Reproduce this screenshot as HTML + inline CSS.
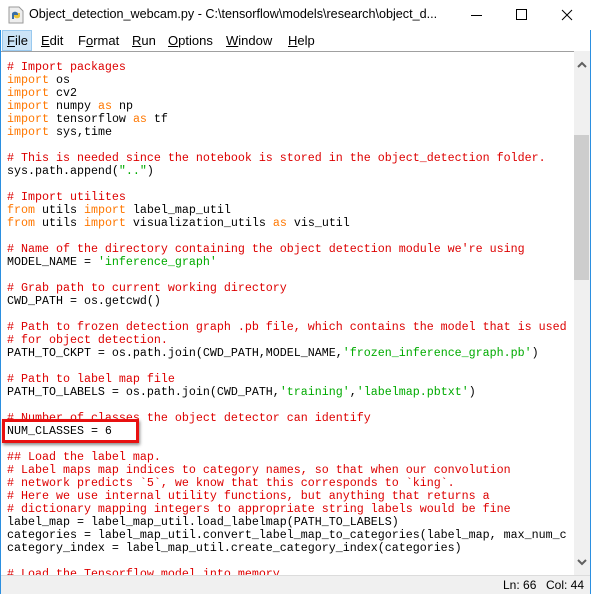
<!DOCTYPE html>
<html><head><meta charset="utf-8"><style>
*{margin:0;padding:0;box-sizing:border-box}
body{width:591px;height:594px;overflow:hidden;background:#fff;font-family:"Liberation Sans",sans-serif;position:relative}
.win{position:absolute;left:0;top:0;width:591px;height:594px;border:1px solid #2b8fe0;border-top:none}
.title{position:absolute;left:0;top:0;width:591px;height:30px;background:#fff}
.title .t{position:absolute;left:29px;top:7px;font-size:12.6px;color:#000;white-space:nowrap}
.menu{position:absolute;left:1px;top:30px;width:589px;height:22px;background:#fff;font-size:13px}
.menu span{position:absolute;top:3px}
.menu u{text-decoration:underline}
.file{position:absolute;left:1px;top:0;width:30px;height:21px;background:#cce4f7;border:1px solid #99c9ef}
.edit{position:absolute;left:1px;top:51px;width:573px;height:524px;border-top:1px solid #a0a0a0;overflow:hidden}
pre{position:absolute;left:6px;top:9px;font-family:"Liberation Mono",monospace;font-size:11.67px;line-height:13px;color:#000}
.c{color:#dd0000}.k{color:#ff7700}.s{color:#00aa00}
.sb{position:absolute;left:574px;top:51px;width:16px;height:524px;background:#f0f0f0}
.thumb{position:absolute;left:0;top:84px;width:15px;height:145px;background:#cdcdcd}
.status{position:absolute;left:1px;top:575px;width:589px;height:19px;background:#f0f0f0;font-size:12px;border-top:1px solid #dcdcdc}
.box{position:absolute;left:2px;top:419px;width:137px;height:24px;border:3px solid #e81010;box-shadow:1px 2px 3px rgba(0,0,0,.45)}
</style></head><body>
<div class="win"></div>
<div class="title">
<svg style="position:absolute;left:8px;top:6px" width="16" height="18"><path d="M1 1h10l4 4v12H1z" fill="#eee" stroke="#999"/><path d="M4 8c0-3 6-3 6 0v2H6v3H4z" fill="#3a6ea5"/><path d="M12 10c0 3-6 3-6 0V9h4V7h2z" fill="#e8c33a"/></svg>
<div class="t">Object_detection_webcam.py - C:\tensorflow\models\research\object_d...</div>
<svg style="position:absolute;left:466px;top:8px" width="115" height="14"><path d="M5 7.5h11" stroke="#000"/><rect x="50.5" y="1.5" width="10" height="10" fill="none" stroke="#000"/><path d="M96 2l10 10M106 2l-10 10" stroke="#000"/></svg>
</div>
<div class="menu"><div class="file"></div>
<span style="left:6px"><u>F</u>ile</span>
<span style="left:40px"><u>E</u>dit</span>
<span style="left:77px">F<u>o</u>rmat</span>
<span style="left:131px"><u>R</u>un</span>
<span style="left:167px"><u>O</u>ptions</span>
<span style="left:225px"><u>W</u>indow</span>
<span style="left:287px"><u>H</u>elp</span>
</div>
<div class="edit"><pre><span class="c"># Import packages</span>
<span class="k">import</span> os
<span class="k">import</span> cv2
<span class="k">import</span> numpy <span class="k">as</span> np
<span class="k">import</span> tensorflow <span class="k">as</span> tf
<span class="k">import</span> sys,time

<span class="c"># This is needed since the notebook is stored in the object_detection folder.</span>
sys.path.append(<span class="s">".."</span>)

<span class="c"># Import utilites</span>
<span class="k">from</span> utils <span class="k">import</span> label_map_util
<span class="k">from</span> utils <span class="k">import</span> visualization_utils <span class="k">as</span> vis_util

<span class="c"># Name of the directory containing the object detection module we're using</span>
MODEL_NAME = <span class="s">'inference_graph'</span>

<span class="c"># Grab path to current working directory</span>
CWD_PATH = os.getcwd()

<span class="c"># Path to frozen detection graph .pb file, which contains the model that is used</span>
<span class="c"># for object detection.</span>
PATH_TO_CKPT = os.path.join(CWD_PATH,MODEL_NAME,<span class="s">'frozen_inference_graph.pb'</span>)

<span class="c"># Path to label map file</span>
PATH_TO_LABELS = os.path.join(CWD_PATH,<span class="s">'training'</span>,<span class="s">'labelmap.pbtxt'</span>)

<span class="c"># Number of classes the object detector can identify</span>
NUM_CLASSES = 6

<span class="c">## Load the label map.</span>
<span class="c"># Label maps map indices to category names, so that when our convolution</span>
<span class="c"># network predicts `5`, we know that this corresponds to `king`.</span>
<span class="c"># Here we use internal utility functions, but anything that returns a</span>
<span class="c"># dictionary mapping integers to appropriate string labels would be fine</span>
label_map = label_map_util.load_labelmap(PATH_TO_LABELS)
categories = label_map_util.convert_label_map_to_categories(label_map, max_num_c
category_index = label_map_util.create_category_index(categories)

<span class="c"># Load the Tensorflow model into memory.</span></pre></div>
<div class="box"></div>
<div class="sb">
<svg style="position:absolute;left:3px;top:10px" width="10" height="7"><path d="M1 6l4-4 4 4" fill="none" stroke="#606060" stroke-width="2"/></svg>
<div class="thumb"></div>
<svg style="position:absolute;left:3px;top:508px" width="10" height="7"><path d="M1 1l4 4 4-4" fill="none" stroke="#606060" stroke-width="2"/></svg>
</div>
<div class="status"><span style="position:absolute;left:502px;top:2px">Ln: 66</span><span style="position:absolute;left:545px;top:2px">Col: 44</span></div>
</body></html>
